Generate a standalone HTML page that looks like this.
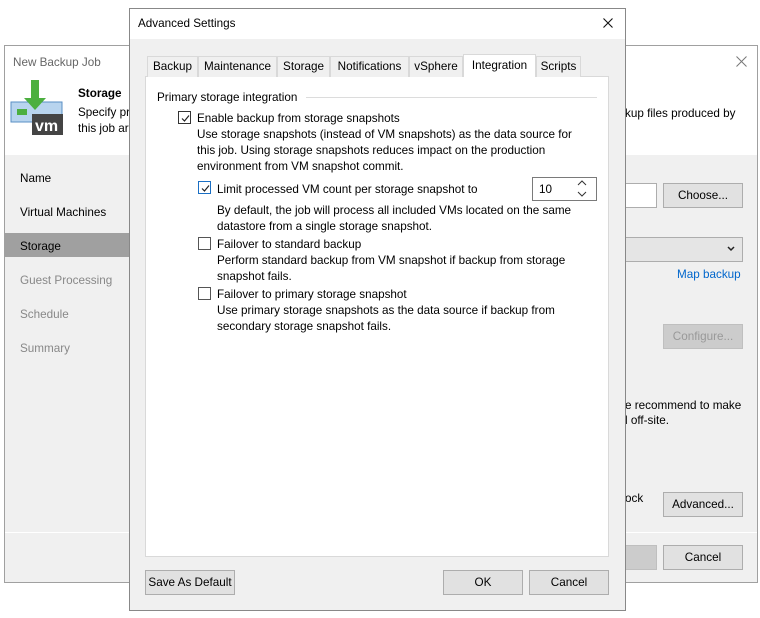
<!DOCTYPE html>
<html><head><meta charset="utf-8"><style>
*{box-sizing:border-box;margin:0;padding:0}
body{width:760px;height:618px;background:#fff;position:relative;overflow:hidden;font-family:"Liberation Sans",sans-serif;font-size:11.7px;color:#000}
.a{position:absolute}
.btn{position:absolute;background:#e1e1e1;border:1px solid #adadad;text-align:center;line-height:23px;font-size:11.7px}
.cb{position:absolute;width:13px;height:13px;border:1px solid #333;background:#fff}
.cb svg{position:absolute;left:1px;top:1px}
.t{position:absolute;line-height:16px;white-space:nowrap;padding-top:1px}
.tab{position:absolute;top:56px;height:21px;border:1px solid #d9d9d9;border-bottom:none;background:#f0f0f0;line-height:20px;text-align:center;font-size:11.7px}
</style></head><body>
<div class="a" style="left:4px;top:45px;width:754px;height:538px;border:1px solid #a0a0a0;background:#f0f0f0"></div>
<div class="a" style="left:5px;top:46px;width:752px;height:109px;background:#fff"></div>
<div class="t" style="left:13px;top:54px;color:#666">New Backup Job</div>
<svg class="a" style="left:736px;top:56px" width="11" height="11"><path d="M0.5 0.5l10 10M10.5 0.5l-10 10" stroke="#777" stroke-width="1"/></svg>
<svg class="a" style="left:10px;top:80px" width="54" height="56">
<rect x="1" y="22" width="51" height="20" fill="#b8d4ee" stroke="#5a8fc4"/>
<rect x="7" y="29" width="10" height="6" fill="#4caf3f"/>
<rect x="22" y="34" width="31" height="21" fill="#444"/>
<text x="25" y="51" fill="#fff" font-family="Liberation Sans" font-weight="bold" font-size="16">vm</text>
<path d="M21 0h8v18h7l-11 12l-11-12h7z" fill="#4caf3f"/>
</svg>
<div class="t" style="left:78px;top:85px;font-weight:bold">Storage</div>
<div class="t" style="left:78px;top:104px">Specify pr</div>
<div class="t" style="left:78px;top:120px">this job ar</div>
<div class="t" style="left:625px;top:105px">kup files produced by</div>
<div class="t" style="left:20px;top:170px">Name</div>
<div class="t" style="left:20px;top:204px">Virtual Machines</div>
<div class="a" style="left:5px;top:233px;width:124px;height:24px;background:#a0a0a0"></div>
<div class="t" style="left:20px;top:238px">Storage</div>
<div class="t" style="left:20px;top:272px;color:#888">Guest Processing</div>
<div class="t" style="left:20px;top:306px;color:#888">Schedule</div>
<div class="t" style="left:20px;top:340px;color:#888">Summary</div>
<div class="a" style="left:5px;top:532px;width:752px;height:1px;background:#fff"></div>
<div class="a" style="left:620px;top:183px;width:37px;height:25px;border:1px solid #adadad;border-left:none;background:#fff"></div>
<div class="btn" style="left:663px;top:183px;width:80px;height:25px">Choose...</div>
<div class="a" style="left:620px;top:237px;width:123px;height:25px;border:1px solid #adadad;border-left:none;background:#e5e5e5"></div>
<svg class="a" style="left:727px;top:246px" width="8" height="6"><path d="M1 1l3 3l3-3" fill="none" stroke="#222" stroke-width="1.5"/></svg>
<div class="t" style="left:677px;top:266px;color:#0066cc">Map backup</div>
<div class="btn" style="left:663px;top:324px;width:80px;height:25px;color:#999;background:#ccc;border-color:#bfbfbf">Configure...</div>
<div class="t" style="left:625px;top:397px">e recommend to make</div>
<div class="t" style="left:625px;top:412px">l off-site.</div>
<div class="t" style="left:625px;top:490px">ock</div>
<div class="btn" style="left:663px;top:492px;width:80px;height:25px">Advanced...</div>
<div class="btn" style="left:620px;top:545px;width:37px;height:25px;color:#999;background:#ccc;border-color:#bfbfbf;border-left:none;text-align:left">h</div>
<div class="btn" style="left:663px;top:545px;width:80px;height:25px">Cancel</div>

<div class="a" style="left:129px;top:8px;width:497px;height:603px;border:1px solid #888;background:#f0f0f0"></div>
<div class="a" style="left:130px;top:9px;width:495px;height:30px;background:#fff"></div>
<div class="t" style="left:138px;top:15px">Advanced Settings</div>
<svg class="a" style="left:603px;top:18px" width="10" height="10"><path d="M0.5 0.5l9 9M9.5 0.5l-9 9" stroke="#111" stroke-width="1.1"/></svg>
<div class="a" style="left:145px;top:76px;width:464px;height:481px;border:1px solid #d9d9d9;background:#fff"></div>
<div class="tab" style="left:147px;width:51px">Backup</div>
<div class="tab" style="left:198px;width:79px">Maintenance</div>
<div class="tab" style="left:277px;width:53px">Storage</div>
<div class="tab" style="left:330px;width:79px">Notifications</div>
<div class="tab" style="left:409px;width:54px">vSphere</div>
<div class="tab" style="left:463px;top:54px;height:23px;width:73px;background:#fff;line-height:22px">Integration</div>
<div class="tab" style="left:536px;width:45px">Scripts</div>
<div class="t" style="left:157px;top:89px">Primary storage integration</div>
<div class="a" style="left:306px;top:97px;width:291px;height:1px;background:#dcdcdc"></div>
<div class="cb" style="left:178px;top:111px"><svg width="11" height="11"><path d="M2 5.5l2.5 2.5l4.5-5.5" fill="none" stroke="#222" stroke-width="1.2"/></svg></div>
<div class="t" style="left:197px;top:110px">Enable backup from storage snapshots</div>
<div class="t" style="left:197px;top:126px">Use storage snapshots (instead of VM snapshots) as the data source for</div>
<div class="t" style="left:197px;top:142px">this job. Using storage snapshots reduces impact on the production</div>
<div class="t" style="left:197px;top:158px">environment from VM snapshot commit.</div>
<div class="cb" style="left:198px;top:181px;border-color:#1a6fc4"><svg width="11" height="11"><path d="M2 5.5l2.5 2.5l4.5-5.5" fill="none" stroke="#222" stroke-width="1.2"/></svg></div>
<div class="t" style="left:217px;top:181px">Limit processed VM count per storage snapshot to</div>
<div class="a" style="left:532px;top:177px;width:65px;height:24px;border:1px solid #7a7a7a;background:#fff"></div>
<div class="t" style="left:539px;top:181px">10</div>
<svg class="a" style="left:577px;top:180px" width="10" height="18"><path d="M1 5l4-4l4 4M1 12l4 4l4-4" fill="none" stroke="#333" stroke-width="1"/></svg>
<div class="t" style="left:217px;top:202px">By default, the job will process all included VMs located on the same</div>
<div class="t" style="left:217px;top:218px">datastore from a single storage snapshot.</div>
<div class="cb" style="left:198px;top:237px;border-color:#555"></div>
<div class="t" style="left:217px;top:236px">Failover to standard backup</div>
<div class="t" style="left:217px;top:252px">Perform standard backup from VM snapshot if backup from storage</div>
<div class="t" style="left:217px;top:268px">snapshot fails.</div>
<div class="cb" style="left:198px;top:287px;border-color:#555"></div>
<div class="t" style="left:217px;top:286px">Failover to primary storage snapshot</div>
<div class="t" style="left:217px;top:302px">Use primary storage snapshots as the data source if backup from</div>
<div class="t" style="left:217px;top:318px">secondary storage snapshot fails.</div>
<div class="btn" style="left:145px;top:570px;width:90px;height:25px">Save As Default</div>
<div class="btn" style="left:443px;top:570px;width:80px;height:25px">OK</div>
<div class="btn" style="left:529px;top:570px;width:80px;height:25px">Cancel</div>
</body></html>
